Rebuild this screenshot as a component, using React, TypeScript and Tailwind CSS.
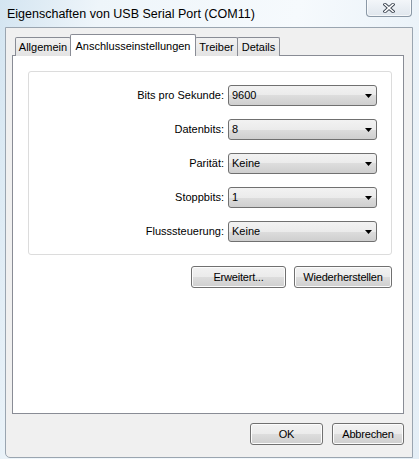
import React from "react";

const font = { fontFamily: '"Liberation Sans", Arial, sans-serif' };

const rows = [
  { label: "Bits pro Sekunde:", value: "9600" },
  { label: "Datenbits:", value: "8" },
  { label: "Parität:", value: "Keine" },
  { label: "Stoppbits:", value: "1" },
  { label: "Flusssteuerung:", value: "Keine" },
];

function Combo({ value }: { value: string }) {
  return (
    <div className="h-[21px] w-[149px] flex items-center justify-between rounded-[3px] border border-[#707070] bg-[linear-gradient(#f2f2f2_0%,#ebebeb_50%,#dddddd_50%,#cfcfcf_100%)] pl-[3px] pr-[4px] text-[11px] text-black">
      <span>{value}</span>
      <svg width="7" height="4" viewBox="0 0 7 4">
        <path d="M0 0h7L3.5 4z" fill="#000" />
      </svg>
    </div>
  );
}

function Button({ label, w }: { label: string; w: string }) {
  return (
    <div
      className={`${w} h-[22px] flex items-center justify-center rounded-[3px] border border-[#707070] bg-[linear-gradient(#f2f2f2_0%,#ebebeb_50%,#dddddd_50%,#cfcfcf_100%)] text-[11px] tracking-[-0.2px] text-black shadow-[inset_0_0_0_1px_#fcfcfc]`}
    >
      {label}
    </div>
  );
}

function Tab({ label, w, active }: { label: string; w: string; active?: boolean }) {
  if (active)
    return (
      <div
        className={`${w} -mx-px h-[22px] z-10 flex justify-center pt-[3px] rounded-t-[2px] border border-b-0 border-[#898c95] bg-white text-[11px] text-black`}
      >
        {label}
      </div>
    );
  return (
    <div
      className={`${w} h-[19px] flex items-center justify-center rounded-t-[2px] border border-b-0 border-[#898c95] bg-[linear-gradient(#f2f2f2,#e3e3e3)] text-[11px] text-black`}
    >
      {label}
    </div>
  );
}

export default function App() {
  return (
    <div
      className="w-[419px] h-[459px] flex flex-col overflow-hidden bg-[linear-gradient(100deg,#d4e5f1_0%,#eef5fa_20%,#f6fafd_60%,#e4eef6_100%)]"
      style={font}
    >
      {/* title bar */}
      <div className="h-[27px] flex items-start justify-between shrink-0">
        <span className="pl-[7px] pt-[6px] text-[12.5px] text-black leading-[16px]">
          Eigenschaften von USB Serial Port (COM11)
        </span>
        <div className="mr-[7px] -mt-px w-[46px] h-[18px] flex items-center justify-center rounded-b-[4px] border border-t-0 border-[#8a98a6] bg-[linear-gradient(#f4f7fa,#dfe6ed)] shadow-[inset_0_0_0_1px_#ffffffaa]">
          <svg width="12" height="10" viewBox="0 0 12 10">
            <path d="M2 1.5L10 8.5M10 1.5L2 8.5" stroke="#3b4450" strokeWidth="3.4" strokeLinecap="square" />
            <path d="M2 1.5L10 8.5M10 1.5L2 8.5" stroke="#fff" strokeWidth="1.6" strokeLinecap="square" />
          </svg>
        </div>
      </div>

      {/* client area */}
      <div className="ml-[5px] mr-[6px] h-[431px] flex flex-col rounded-bl-[5px] border border-[#9aa5b0] bg-[#f0f0f0] pl-[6px] pr-[8px] pt-[7px]">
        {/* tabs */}
        <div className="flex items-end pl-[3px] h-[21px] relative z-10">
          <Tab label="Allgemein" w="w-[56px]" />
          <Tab label="Anschlusseinstellungen" w="w-[126px]" active />
          <Tab label="Treiber" w="w-[43px]" />
          <Tab label="Details" w="w-[43px] -ml-px" />
        </div>
        <div className="h-[359px] -mt-px border border-[#898c95] bg-white pl-[15px] pr-[11px] pt-[15px]">
          <div className="h-[184px] rounded-[3px] border border-[#dcdcdc] pt-[13px] pr-[14px] flex flex-col gap-[13px]">
            {rows.map((r) => (
              <div key={r.label} className="flex items-center justify-end gap-[4px]">
                <span className="text-[11px] text-black">{r.label}</span>
                <Combo value={r.value} />
              </div>
            ))}
          </div>
          <div className="flex justify-end gap-[8px] mt-[11px]">
            <Button label="Erweitert..." w="w-[95px]" />
            <Button label="Wiederherstellen" w="w-[98px]" />
          </div>
        </div>
        <div className="flex justify-end gap-[9px] mt-[9px]">
          <Button label="OK" w="w-[73px]" />
          <Button label="Abbrechen" w="w-[72px]" />
        </div>
      </div>
    </div>
  );
}
